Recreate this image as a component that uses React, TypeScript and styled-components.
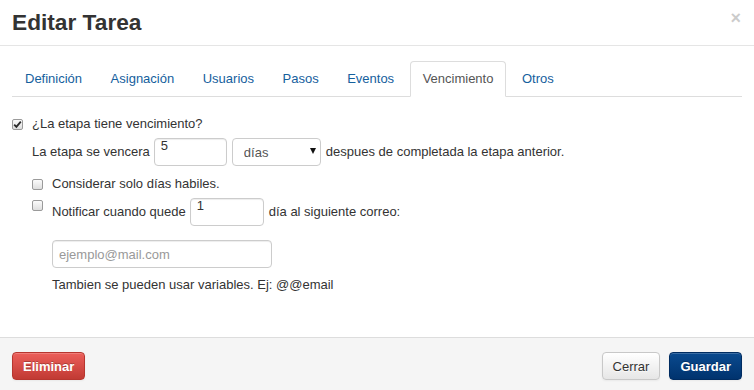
import React, { useState } from "react";
import styled, { createGlobalStyle } from "styled-components";

const GlobalStyle = createGlobalStyle`
  html, body {
    margin: 0;
    padding: 0;
    background: #fff;
  }
  body {
    font-family: "Liberation Sans", Arial, Helvetica, sans-serif;
    font-size: 13px;
    color: #333;
  }
  * {
    box-sizing: border-box;
  }
`;

const Modal = styled.div`
  width: 754px;
  height: 390px;
  display: flex;
  flex-direction: column;
  background: #fff;
`;

const Header = styled.div`
  display: flex;
  justify-content: space-between;
  align-items: flex-start;
  padding: 9px 13px 9px 12px;
  border-bottom: 1px solid #e5e5e5;
`;

const Title = styled.h3`
  margin: 0;
  font-size: 22.7px;
  font-weight: bold;
  line-height: 27px;
  color: #333;
`;

const Close = styled.button`
  border: 0;
  background: none;
  padding: 0;
  margin-top: 0;
  font-family: "Liberation Sans", Arial, sans-serif;
  font-size: 18px;
  font-weight: bold;
  line-height: 18px;
  color: #000;
  opacity: 0.2;
  cursor: pointer;
`;

const Body = styled.div`
  flex: 1;
  padding: 15px 12px 0;
`;

const Tabs = styled.ul`
  display: flex;
  list-style: none;
  margin: 0 0 18px;
  padding: 0;
  border-bottom: 1px solid #ddd;
`;

const Tab = styled.li`
  margin-right: 2.5px;
  margin-bottom: -1px;
`;

const TabLink = styled.a<{ $active?: boolean }>`
  display: block;
  padding: 8px 12px;
  line-height: 18px;
  border: 1px solid transparent;
  border-radius: 4px 4px 0 0;
  text-decoration: none;
  cursor: pointer;
  color: ${(p) => (p.$active ? "#555" : "#15609d")};
  background: ${(p) => (p.$active ? "#fff" : "transparent")};
  border-color: ${(p) => (p.$active ? "#ddd #ddd transparent" : "transparent")};
`;

const CheckRow = styled.label<{ $indent?: number; $top?: number; $align?: string }>`
  display: flex;
  align-items: ${(p) => p.$align || "center"};
  gap: 9px;
  margin-left: ${(p) => p.$indent || 0}px;
  margin-top: ${(p) => p.$top || 0}px;
  line-height: 18px;
  cursor: pointer;
`;

const Box = styled.span<{ $top?: number }>`
  flex: none;
  width: 11px;
  height: 11px;
  margin-top: ${(p) => p.$top || 0}px;
  border: 1px solid #9a9a9a;
  border-radius: 2px;
  background: linear-gradient(#fbfbfb, #dedede);
  display: flex;
  align-items: center;
  justify-content: center;
`;

const Line = styled.div<{ $indent?: number; $top?: number }>`
  display: flex;
  align-items: center;
  gap: 4px;
  margin-left: ${(p) => p.$indent || 0}px;
  margin-top: ${(p) => p.$top || 0}px;
  line-height: 18px;
`;

const TextInput = styled.input<{ $width: number; $raised?: boolean }>`
  width: ${(p) => p.$width}px;
  height: 28px;
  margin: 0;
  padding: ${(p) => (p.$raised ? "0 6px 14px" : "4px 6px")};
  line-height: ${(p) => (p.$raised ? "14px" : "18px")};
  font-family: "Liberation Sans", Arial, sans-serif;
  font-size: 13px;
  color: #333;
  background: #fff;
  border: 1px solid #ccc;
  border-radius: 4px;
  box-shadow: inset 0 1px 1px rgba(0, 0, 0, 0.075);
  outline: none;
  &::placeholder {
    color: #999;
  }
`;

const SelectWrap = styled.span`
  position: relative;
  display: inline-flex;
  margin-left: 1px;
`;

const Select = styled.select`
  appearance: none;
  width: 89px;
  height: 28px;
  margin: 0;
  padding: 0 20px 0 11px;
  font-family: "Liberation Sans", Arial, sans-serif;
  font-size: 13px;
  color: #555;
  background: #fff;
  border: 1px solid #ccc;
  border-radius: 4px;
  outline: none;
`;

const Arrow = styled.span`
  position: absolute;
  right: 5px;
  top: 10px;
  width: 0;
  height: 0;
  border-left: 3.5px solid transparent;
  border-right: 3.5px solid transparent;
  border-top: 6px solid #111;
  pointer-events: none;
`;

const After = styled.span`
  margin-left: 1px;
`;

const Hint = styled.div`
  margin: 8px 0 0 40px;
  line-height: 18px;
`;

const Footer = styled.div`
  display: flex;
  align-items: center;
  padding: 14px 12px 10px;
  background: #f5f5f5;
  border-top: 1px solid #ddd;
`;

const Spacer = styled.div`
  flex: 1;
`;

const Button = styled.button<{ $kind?: "danger" | "primary" }>`
  height: 28px;
  padding: 0 10px;
  margin-left: ${(p) => (p.$kind === "primary" ? "9px" : "0")};
  font-family: "Liberation Sans", Arial, sans-serif;
  font-size: 13px;
  font-weight: ${(p) => (p.$kind ? "bold" : "normal")};
  border-radius: 4px;
  cursor: pointer;
  color: ${(p) => (p.$kind ? "#fff" : "#333")};
  text-shadow: ${(p) =>
    p.$kind ? "0 -1px 0 rgba(0,0,0,0.25)" : "0 1px 1px rgba(255,255,255,0.75)"};
  border: 1px solid
    ${(p) =>
      p.$kind === "danger" ? "#b7362f" : p.$kind === "primary" ? "#002c61" : "#c8c8c8"};
  background: ${(p) =>
    p.$kind === "danger"
      ? "linear-gradient(#ec5f5a, #c13a33)"
      : p.$kind === "primary"
      ? "linear-gradient(#0a4a8f, #00336e)"
      : "linear-gradient(#ffffff, #e6e6e6)"};
  box-shadow: inset 0 1px 0 rgba(255, 255, 255, 0.2), 0 1px 2px rgba(0, 0, 0, 0.05);
`;

const tabs = ["Definición", "Asignación", "Usuarios", "Pasos", "Eventos", "Vencimiento", "Otros"];

const Check: React.FC<{ checked: boolean; top?: number }> = ({ checked, top }) => (
  <Box $top={top}>
    {checked && (
      <svg width="9" height="9" viewBox="0 0 9 9">
        <path d="M1.2 4.6 L3.4 6.9 L7.8 1.6" fill="none" stroke="#2b2b2b" strokeWidth="1.8" />
      </svg>
    )}
  </Box>
);

const App: React.FC = () => {
  const [active, setActive] = useState("Vencimiento");
  const [vence, setVence] = useState(true);
  const [habiles, setHabiles] = useState(false);
  const [notificar, setNotificar] = useState(false);

  return (
    <Modal>
      <GlobalStyle />
      <Header>
        <Title>Editar Tarea</Title>
        <Close>×</Close>
      </Header>
      <Body>
        <Tabs>
          {tabs.map((t) => (
            <Tab key={t}>
              <TabLink $active={t === active} onClick={() => setActive(t)}>
                {t}
              </TabLink>
            </Tab>
          ))}
        </Tabs>

        <CheckRow onClick={() => setVence(!vence)}>
          <Check checked={vence} />
          ¿La etapa tiene vencimiento?
        </CheckRow>

        <Line $indent={20} $top={5}>
          <span>La etapa se vencera</span>
          <TextInput $width={73} $raised defaultValue="5" />
          <SelectWrap>
            <Select defaultValue="dias">
              <option value="dias">días</option>
              <option value="semanas">semanas</option>
            </Select>
            <Arrow />
          </SelectWrap>
          <After>despues de completada la etapa anterior.</After>
        </Line>

        <CheckRow $indent={20} $top={9} onClick={() => setHabiles(!habiles)}>
          <Check checked={habiles} />
          Considerar solo días habiles.
        </CheckRow>

        <CheckRow as="div" $indent={20} $top={5} $align="flex-start">
          <span onClick={() => setNotificar(!notificar)}>
            <Check checked={notificar} top={2} />
          </span>
          <Line>
            <span>Notificar cuando quede</span>
            <TextInput $width={74} $raised defaultValue="1" />
            <After>día al siguiente correo:</After>
          </Line>
        </CheckRow>

        <Line $indent={40} $top={14}>
          <TextInput $width={220} placeholder="ejemplo@mail.com" />
        </Line>

        <Hint>Tambien se pueden usar variables. Ej: @@email</Hint>
      </Body>
      <Footer>
        <Button $kind="danger">Eliminar</Button>
        <Spacer />
        <Button>Cerrar</Button>
        <Button $kind="primary">Guardar</Button>
      </Footer>
    </Modal>
  );
};

export default App;
